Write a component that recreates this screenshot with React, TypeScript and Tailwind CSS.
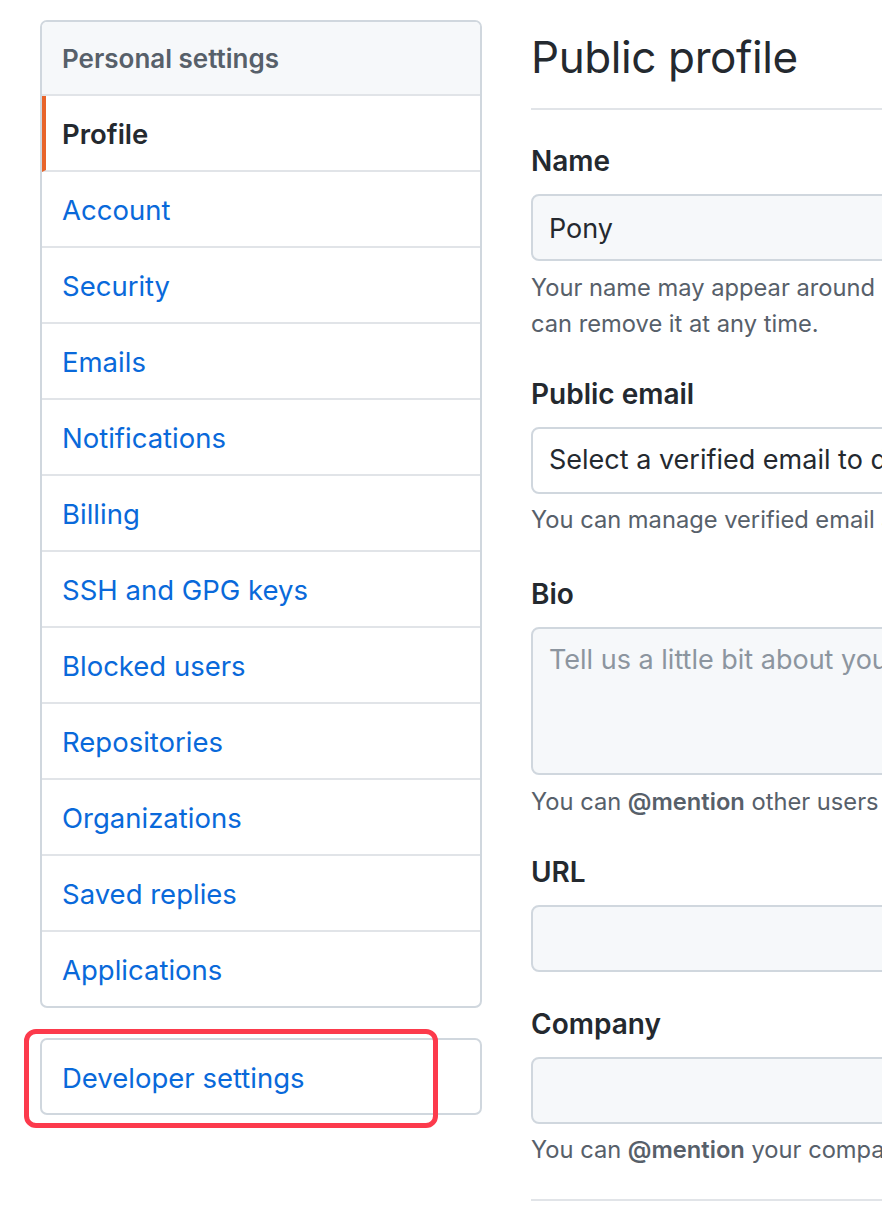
const menuItems = [
  "Account",
  "Security",
  "Emails",
  "Notifications",
  "Billing",
  "SSH and GPG keys",
  "Blocked users",
  "Repositories",
  "Organizations",
  "Saved replies",
  "Applications",
];

function Label({ children, className = "" }: { children: React.ReactNode; className?: string }) {
  return (
    <label className={`block text-[28px] leading-[40px] font-semibold text-[#24292f] mb-[13px] ${className}`}>
      {children}
    </label>
  );
}

function Help({ children, className = "" }: { children: React.ReactNode; className?: string }) {
  return (
    <p className={`text-[23.7px] leading-[36px] text-[#57606a] whitespace-nowrap ${className}`}>{children}</p>
  );
}

export default function App() {
  return (
    <div className="w-[882px] h-[1218px] overflow-hidden bg-white flex gap-[49px] pl-[40px] pt-[20px] font-['Inter','Liberation_Sans',sans-serif]">
      {/* sidebar */}
      <aside className="w-[442px] shrink-0">
        <nav className="border-2 border-[#d0d7de] rounded-[7px] overflow-hidden">
          <div className="h-[74px] bg-[#f6f8fa] px-[20px] flex items-center text-[26px] font-semibold text-[#57606a] border-b-2 border-[#e1e4e8]">
            Personal settings
          </div>
          <div className="h-[76px] flex items-center border-l-4 border-l-[#e8642a] border-b-2 border-b-[#e1e4e8] pl-[16px] pt-[4px] text-[27.5px] font-semibold text-[#24292f]">
            Profile
          </div>
          {menuItems.map((item, i) => (
            <a
              key={item}
              href="#"
              className={`flex items-center px-[20px] pt-[4px] text-[27.5px] text-[#0969da] ${
                i < menuItems.length - 1 ? "h-[76px] border-b-2 border-[#e1e4e8]" : "h-[74px]"
              }`}
            >
              {item}
            </a>
          ))}
        </nav>

        <div className="relative mt-[30px] border-2 border-[#d0d7de] rounded-[7px]">
          <a href="#" className="h-[73px] flex items-center px-[20px] pt-[4px] text-[27.5px] text-[#0969da]">
            Developer settings
          </a>
          <div className="absolute -left-[18px] -top-[11px] w-[414px] h-[99px] border-[5px] border-[#fc3a4c] rounded-[12px] pointer-events-none" />
        </div>
      </aside>

      {/* main */}
      <main className="w-[800px] shrink-0">
        <div className="pt-[5px] pb-[19px] border-b-2 border-[#e1e4e8]">
          <h2 className="text-[44px] leading-[64px] tracking-[-0.4px] text-[#24292f]">Public profile</h2>
        </div>

        <div className="mt-[31px]">
          <Label>Name</Label>
          <input
            readOnly
            defaultValue="Pony"
            className="w-full h-[67px] border-2 border-[#d0d7de] rounded-[8px] bg-[#f6f8fa] px-[16px] pt-[2px] text-[27px] text-[#24292f] outline-none"
          />
          <Help className="mt-[9px]">
            Your name may appear around GitHub where you contribute or are mentioned. You
            <br />
            can remove it at any time.
          </Help>
        </div>

        <div className="mt-[32px]">
          <Label>Public email</Label>
          <div className="h-[67px] border-2 border-[#d0d7de] rounded-[8px] bg-white px-[16px] flex items-center text-[27px] text-[#24292f]">
            Select a verified email to display
          </div>
          <Help className="mt-[8px]">You can manage verified email addresses in your email settings.</Help>
        </div>

        <div className="mt-[36px]">
          <Label>Bio</Label>
          <textarea
            placeholder="Tell us a little bit about yourself"
            className="block w-full h-[148px] border-2 border-[#d0d7de] rounded-[8px] bg-[#f6f8fa] px-[16px] pt-[11px] text-[27px] leading-[40px] text-[#24292f] placeholder:text-[#8c959f] resize-none outline-none"
          />
          <Help className="mt-[9px]">
            You can <strong className="font-semibold">@mention</strong> other users and organizations to link to them.
          </Help>
        </div>

        <div className="mt-[32px]">
          <Label>URL</Label>
          <input
            readOnly
            className="w-full h-[67px] border-2 border-[#d0d7de] rounded-[8px] bg-[#f6f8fa] px-[16px] text-[27px] outline-none"
          />
        </div>

        <div className="mt-[32px]">
          <Label>Company</Label>
          <input
            readOnly
            className="w-full h-[67px] border-2 border-[#d0d7de] rounded-[8px] bg-[#f6f8fa] px-[16px] text-[27px] outline-none"
          />
          <Help className="mt-[8px]">
            You can <strong className="font-semibold">@mention</strong> your company's GitHub organization to link it.
          </Help>
        </div>

        <div className="mt-[31px] border-t-2 border-[#e1e4e8]" />
      </main>
    </div>
  );
}
